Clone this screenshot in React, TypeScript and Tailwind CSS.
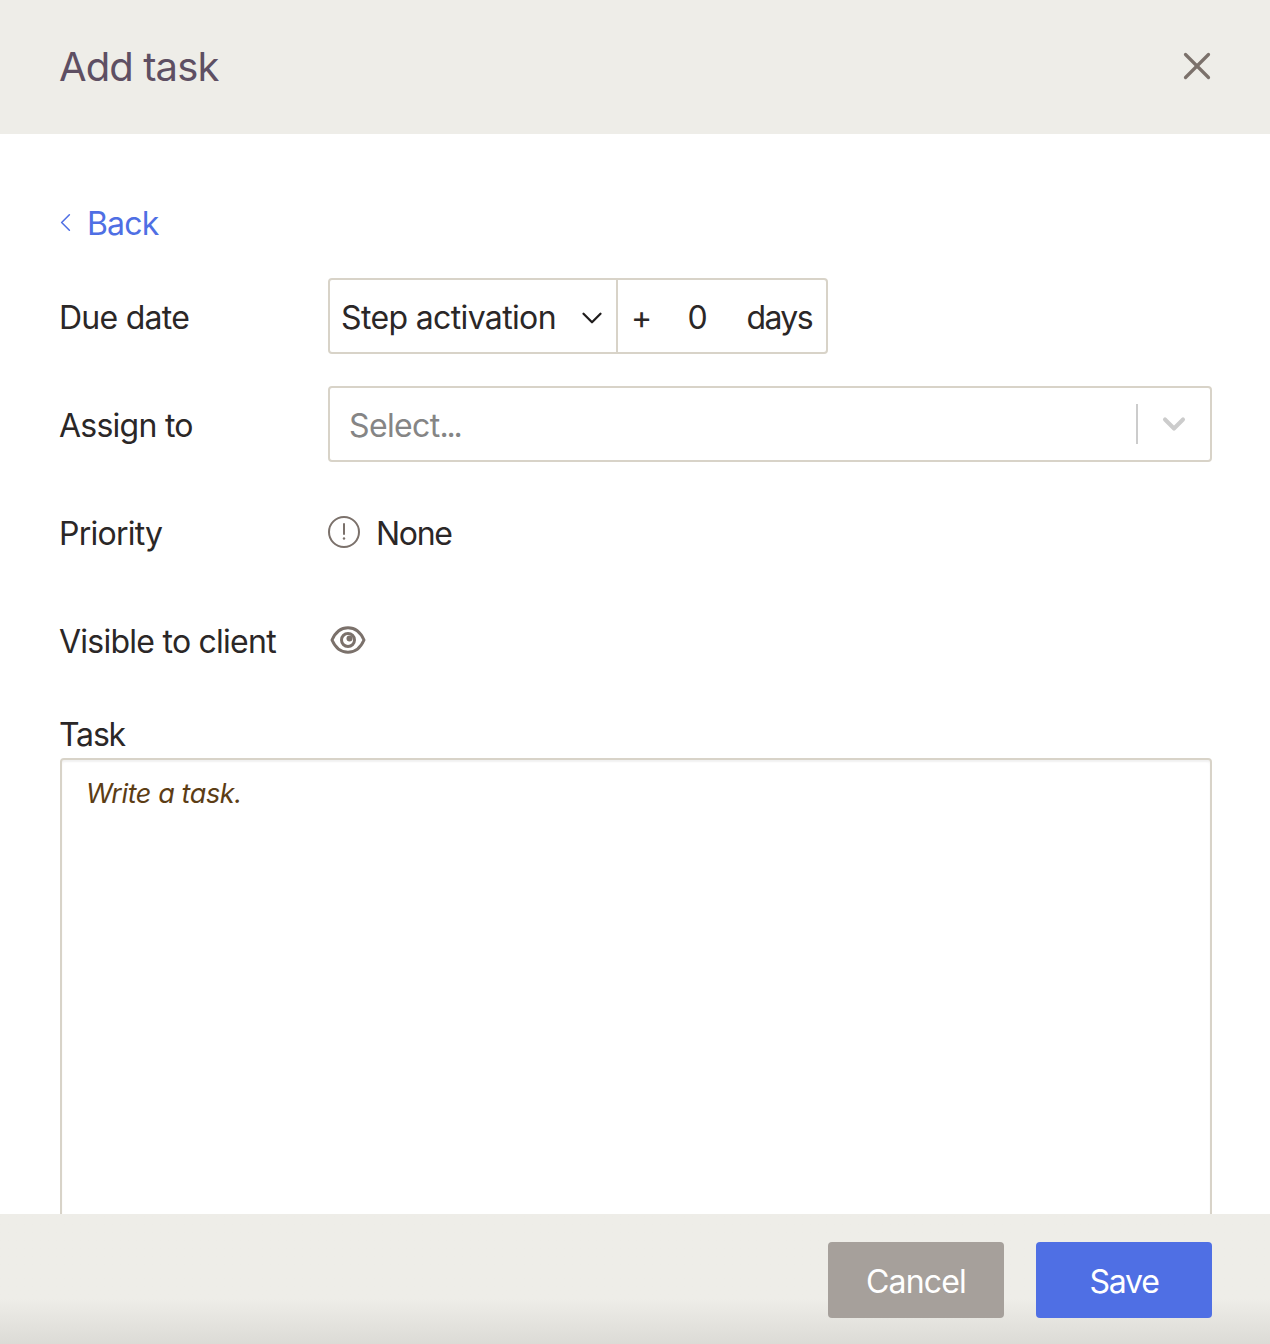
import { ChevronDown, ChevronLeft, X } from "lucide-react";

const font = "font-['Inter','Liberation_Sans',sans-serif]";

function Row({ label, children }: { label: string; children: React.ReactNode }) {
  return (
    <div className="flex h-[76px] items-center">
      <div className="-ml-px w-[269px] pt-[3px] text-[32px] leading-none tracking-[-0.75px] text-[#2b2727]">{label}</div>
      {children}
    </div>
  );
}

export default function App() {
  return (
    <div className={`${font} flex h-[1344px] w-[1270px] flex-col overflow-hidden bg-white`}>
      <div className="flex h-[134px] shrink-0 items-center justify-between bg-[#eeede8] pl-[59px] pr-[50px]">
        <h1 className="text-[40px] leading-none tracking-[-0.9px] text-[#5e4f63]">Add task</h1>
        <X size={46} strokeWidth={1.7} className="-mt-[2px] text-[#7b716b]" />
      </div>

      <div className="flex min-h-0 flex-1 flex-col overflow-hidden pl-[60px] pr-[58px] pt-[74px]">
        <div className="flex h-[48px] items-center text-[#4f6fe4]">
          <ChevronLeft size={31} strokeWidth={1.2} className="-ml-[10px] -mt-[3px] mr-[6px]" />
          <span className="text-[32px] leading-none tracking-[-0.85px]">Back</span>
        </div>

        <div className="mt-[38px] flex flex-col gap-[32px]">
          <Row label="Due date">
            <div className="flex h-[76px] w-[500px] rounded-[4px] border-2 border-[#d8d3c8] text-[32px] tracking-[-0.64px] text-[#2b2727]">
              <div className="flex w-[288px] items-center justify-between border-r-2 border-[#d8d3c8] pl-[11px] pr-[7px] pt-[3px]">
                <span>Step activation</span>
                <ChevronDown size={34} strokeWidth={1.6} className="text-[#1f1c1c]" />
              </div>
              <div className="flex flex-1 items-center pl-[13px] pt-[3px]">
                <span>+</span>
                <span className="ml-[36px]">0</span>
                <span className="ml-auto pr-[14px] tracking-[-1.6px]">days</span>
              </div>
            </div>
          </Row>
          <Row label="Assign to">
            <div className="flex h-[76px] flex-1 items-center rounded-[4px] border-2 border-[#d8d3c8]">
              <span className="flex-1 pl-[19px] pt-[3px] text-[32px] tracking-[-0.64px] text-[#858585]">
                Select<span className="tracking-[-2.2px]">...</span>
              </span>
              <div className="h-[40px] w-[2px] bg-[#cccccc]" />
              <ChevronDown size={36} strokeWidth={2.7} className="ml-[18px] mr-[18px] text-[#cccccc]" />
            </div>
          </Row>
          <Row label="Priority">
            <div className="flex items-center">
              <svg width="32" height="32" viewBox="0 0 32 32" fill="none" stroke="#7b716b" strokeWidth="2">
                <circle cx="16" cy="16" r="15" />
                <path d="M16 8v10" strokeLinecap="round" />
                <circle cx="16" cy="22.5" r="1.2" fill="#7b716b" stroke="none" />
              </svg>
              <span className="ml-[16px] pt-[3px] text-[32px] tracking-[-1.3px] text-[#2b2727]">None</span>
            </div>
          </Row>
          <Row label="Visible to client">
            <svg width="36" height="28" viewBox="0 0 36 28" fill="none" stroke="#7b716b" strokeWidth="3" className="ml-[2px]">
              <path d="M2 14C5.500 6 11 1.700 18 1.700S30.500 6 34 14c-3.500 8-9 12.300-16 12.300S5.500 22 2 14Z" strokeLinejoin="round" />
              <circle cx="18" cy="14" r="6.500" />
              <circle cx="19.500" cy="12.500" r="3" fill="#7b716b" stroke="none" />
            </svg>
          </Row>
        </div>

        <div className="-ml-px mt-[38px] text-[32px] leading-[38px] tracking-[-1.2px] text-[#2b2727]">Task</div>
        <div className="mt-[4px] min-h-[600px] w-full shrink-0 rounded-[4px] border-2 border-[#d8d3c8] pl-[24px] pt-[20px] shadow-[inset_0_2px_2px_rgba(0,0,0,0.06)]">
          <span className="text-[27px] italic leading-none tracking-[-0.4px] text-[#5c3d15]">Write a task.</span>
        </div>
      </div>

      <div className="flex h-[130px] shrink-0 items-start justify-end gap-[32px] bg-gradient-to-b from-[#eeede8] from-[65%] to-[#dcdbd6] pr-[58px] pt-[28px]">
        <button className="h-[76px] w-[176px] rounded-[4px] bg-[#a6a09b] pt-[3px] text-[32px] tracking-[-0.8px] text-white">Cancel</button>
        <button className="h-[76px] w-[176px] rounded-[4px] bg-[#4f6fe4] pt-[3px] text-[32px] tracking-[-1.2px] text-white">Save</button>
      </div>
    </div>
  );
}
